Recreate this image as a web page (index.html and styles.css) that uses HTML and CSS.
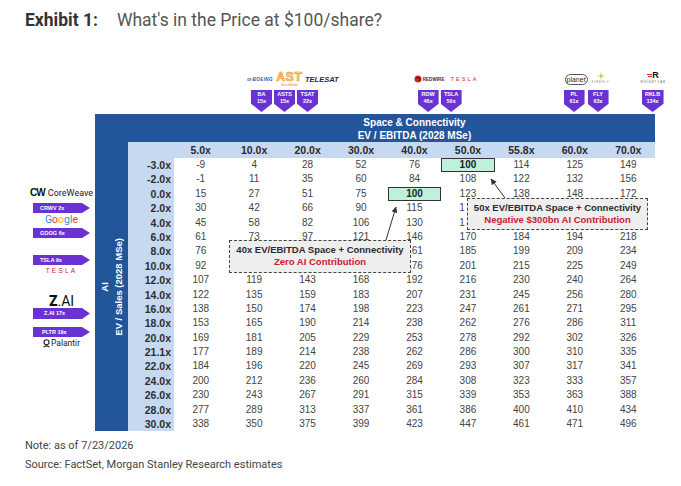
FILE: index.html
```html
<!DOCTYPE html>
<html>
<head>
<meta charset="utf-8">
<link rel="stylesheet" href="styles.css">
</head>
<body>
<div class="title"><b>Exhibit 1:</b><span class="sub">What's in the Price at $100/share?</span></div>

<div class="topstrip">
  <div class="grp g1">
    <div class="logos">
      <span class="boeing"><svg width="6" height="5" viewBox="0 0 6 5"><ellipse cx="3" cy="2.5" rx="2.6" ry="1.5" fill="none" stroke="#1d4fa0" stroke-width=".7"/><path d="M0.4 3.6 L5.6 1.4" stroke="#1d4fa0" stroke-width=".6"/></svg><span>BOEING</span></span>
      <span class="ast"><span class="ast-big">AST</span><span class="ast-small">SpaceMobile</span></span>
      <span class="telesat">TELESAT</span>
    </div>
    <div class="tags">
      <div class="ttag">BA<br>15x</div>
      <div class="ttag">ASTS<br>15x</div>
      <div class="ttag">TSAT<br>22x</div>
    </div>
  </div>
  <div class="grp g2">
    <div class="logos">
      <span class="redwire"><svg width="8" height="8" viewBox="0 0 9 9"><circle cx="4.5" cy="4.5" r="4" fill="#d42a2a"/><path d="M2.6 4.6a1.9 1.9 0 1 1 1.9 1.9" fill="none" stroke="#3a0d0d" stroke-width="1"/></svg><span>REDWIRE</span></span>
      <span class="tesla-top">TESLA</span>
    </div>
    <div class="tags">
      <div class="ttag">RDW<br>46x</div>
      <div class="ttag">TSLA<br>50x</div>
    </div>
  </div>
  <div class="grp g3">
    <div class="logos">
      <span class="planet">planet</span>
      <span class="firefly"><svg width="8" height="8" viewBox="0 0 8 8"><path d="M4 0 L4.7 3.3 L8 4 L4.7 4.7 L4 8 L3.3 4.7 L0 4 L3.3 3.3 Z" fill="#a9cc2e"/></svg><span>FIREFLY</span></span>
      <span class="rocket"><span class="rmark"><svg width="5" height="6" viewBox="0 0 5 6"><rect y="1" width="5" height="1" fill="#d8262c"/><rect x="1" y="3" width="4" height="1" fill="#d8262c"/></svg><b>R</b></span><span class="rtext">ROCKET LAB</span></span>
    </div>
    <div class="tags">
      <div class="ttag">PL<br>61x</div>
      <div class="ttag fly">FLY<br>63x</div>
      <div class="ttag rklb">RKLB<br>134x</div>
    </div>
  </div>
</div>

<div class="main">
  <div class="side">
    <div class="cw"><b>CW</b> CoreWeave</div>
    <div class="ltag t1">CRWV 2x</div>
    <div class="google"><span class="gb">G</span><span class="gr">o</span><span class="gy">o</span><span class="gb">g</span><span class="gg">l</span><span class="gr">e</span></div>
    <div class="ltag t2">GOOG 6x</div>
    <div class="ltag t3">TSLA 9x</div>
    <div class="tesla-side">TESLA</div>
    <div class="zai"><b>Z</b>.AI</div>
    <div class="ltag t4">Z.AI 17x</div>
    <div class="ltag t5">PLTR 19x</div>
    <div class="palantir"><svg width="7" height="9" viewBox="0 0 7 9"><circle cx="3.5" cy="3.3" r="2.5" fill="none" stroke="#222" stroke-width="1.1"/><path d="M0.6 8 L3.5 6.7 L6.4 8" fill="none" stroke="#222" stroke-width="1.1"/></svg><span>Palantir</span></div>
  </div>

  <div class="tbl">
    <div class="band">Space &amp; Connectivity<br>EV / EBITDA (2028 MSe)</div>
    <div class="axis"><span>AI<br>EV / Sales (2028 MSe)</span></div>

    <div class="hc"></div><div class="hc">5.0x</div><div class="hc">10.0x</div><div class="hc">20.0x</div><div class="hc">30.0x</div><div class="hc">40.0x</div><div class="hc">50.0x</div><div class="hc">55.8x</div><div class="hc">60.0x</div><div class="hc">70.0x</div>

    <div class="rl">-3.0x</div><div class="c">-9</div><div class="c">4</div><div class="c">28</div><div class="c">52</div><div class="c">76</div><div class="c hl">100</div><div class="c">114</div><div class="c">125</div><div class="c">149</div>
    <div class="rl">-2.0x</div><div class="c">-1</div><div class="c">11</div><div class="c">35</div><div class="c">60</div><div class="c">84</div><div class="c">108</div><div class="c">122</div><div class="c">132</div><div class="c">156</div>
    <div class="rl">0.0x</div><div class="c">15</div><div class="c">27</div><div class="c">51</div><div class="c">75</div><div class="c hl">100</div><div class="c">123</div><div class="c">138</div><div class="c">148</div><div class="c">172</div>
    <div class="rl">2.0x</div><div class="c">30</div><div class="c">42</div><div class="c">66</div><div class="c">90</div><div class="c">115</div><div class="c part">1</div><div class="c"></div><div class="c"></div><div class="c"></div>
    <div class="rl">4.0x</div><div class="c">45</div><div class="c">58</div><div class="c">82</div><div class="c">106</div><div class="c">130</div><div class="c part">1</div><div class="c"></div><div class="c"></div><div class="c"></div>
    <div class="rl">6.0x</div><div class="c">61</div><div class="c">73</div><div class="c">97</div><div class="c">121</div><div class="c">146</div><div class="c">170</div><div class="c">184</div><div class="c">194</div><div class="c">218</div>
    <div class="rl">8.0x</div><div class="c">76</div><div class="c"></div><div class="c"></div><div class="c"></div><div class="c">161</div><div class="c">185</div><div class="c">199</div><div class="c">209</div><div class="c">234</div>
    <div class="rl">10.0x</div><div class="c">92</div><div class="c"></div><div class="c"></div><div class="c"></div><div class="c">176</div><div class="c">201</div><div class="c">215</div><div class="c">225</div><div class="c">249</div>
    <div class="rl">12.0x</div><div class="c">107</div><div class="c">119</div><div class="c">143</div><div class="c">168</div><div class="c">192</div><div class="c">216</div><div class="c">230</div><div class="c">240</div><div class="c">264</div>
    <div class="rl">14.0x</div><div class="c">122</div><div class="c">135</div><div class="c">159</div><div class="c">183</div><div class="c">207</div><div class="c">231</div><div class="c">245</div><div class="c">256</div><div class="c">280</div>
    <div class="rl">16.0x</div><div class="c">138</div><div class="c">150</div><div class="c">174</div><div class="c">198</div><div class="c">223</div><div class="c">247</div><div class="c">261</div><div class="c">271</div><div class="c">295</div>
    <div class="rl">18.0x</div><div class="c">153</div><div class="c">165</div><div class="c">190</div><div class="c">214</div><div class="c">238</div><div class="c">262</div><div class="c">276</div><div class="c">286</div><div class="c">311</div>
    <div class="rl">20.0x</div><div class="c">169</div><div class="c">181</div><div class="c">205</div><div class="c">229</div><div class="c">253</div><div class="c">278</div><div class="c">292</div><div class="c">302</div><div class="c">326</div>
    <div class="rl">21.1x</div><div class="c">177</div><div class="c">189</div><div class="c">214</div><div class="c">238</div><div class="c">262</div><div class="c">286</div><div class="c">300</div><div class="c">310</div><div class="c">335</div>
    <div class="rl">22.0x</div><div class="c">184</div><div class="c">196</div><div class="c">220</div><div class="c">245</div><div class="c">269</div><div class="c">293</div><div class="c">307</div><div class="c">317</div><div class="c">341</div>
    <div class="rl">24.0x</div><div class="c">200</div><div class="c">212</div><div class="c">236</div><div class="c">260</div><div class="c">284</div><div class="c">308</div><div class="c">323</div><div class="c">333</div><div class="c">357</div>
    <div class="rl">26.0x</div><div class="c">230</div><div class="c">243</div><div class="c">267</div><div class="c">291</div><div class="c">315</div><div class="c">339</div><div class="c">353</div><div class="c">363</div><div class="c">388</div>
    <div class="rl">28.0x</div><div class="c">277</div><div class="c">289</div><div class="c">313</div><div class="c">337</div><div class="c">361</div><div class="c">386</div><div class="c">400</div><div class="c">410</div><div class="c">434</div>
    <div class="rl">30.0x</div><div class="c">338</div><div class="c">350</div><div class="c">375</div><div class="c">399</div><div class="c">423</div><div class="c">447</div><div class="c">461</div><div class="c">471</div><div class="c">496</div>

    <svg class="arrows" width="560" height="318" viewBox="0 0 560 318">
      <defs>
        <marker id="ah" viewBox="0 0 6 6" refX="5.5" refY="3" markerWidth="6" markerHeight="6" markerUnits="userSpaceOnUse" orient="auto">
          <path d="M0 0 L6 3 L0 6 Z" fill="#333"/>
        </marker>
      </defs>
      <line x1="291" y1="126" x2="301" y2="93" stroke="#333" stroke-width="1" marker-end="url(#ah)"/>
      <line x1="410" y1="84" x2="396" y2="65" stroke="#333" stroke-width="1" marker-end="url(#ah)"/>
    </svg>

    <div class="callout c1">40x EV/EBITDA Space + Connectivity<br><span class="red">Zero AI Contribution</span></div>
    <div class="callout c2">50x EV/EBITDA Space + Connectivity<br><span class="red">Negative $300bn AI Contribution</span></div>
  </div>
</div>

<div class="notes">
  <div class="note n1">Note: as of 7/23/2026</div>
  <div class="note n2">Source: FactSet, Morgan Stanley Research estimates</div>
</div>
</body>
</html>
```

FILE: styles.css
```css
* { box-sizing: border-box; }
html, body { margin: 0; padding: 0; background: #ffffff; }
body {
  width: 681px;
  height: 486px;
  overflow: hidden;
  font-family: Roboto, "Liberation Sans", sans-serif;
  color: #333;
}

/* Title */
.title {
  height: 31px;
  padding: 10px 0 0 25px;
  font-size: 17.5px;
  line-height: 21px;
  white-space: nowrap;
}
.title b { font-weight: 700; color: #333; }
.title .sub { margin-left: 19px; color: #555; font-weight: 400; }

/* Top logos + tags */
.topstrip {
  height: 83px;
  display: flex;
  align-items: flex-end;
  padding: 0 0 2px 247px;
}
.grp { display: flex; flex-direction: column; }
.g2 { margin-left: 75px; }
.g3 { margin-left: 85px; }
.logos { height: 18px; display: flex; align-items: center; white-space: nowrap; }
.tags { height: 22px; margin-top: 2px; display: flex; gap: 2px; }
.g1 .tags, .g2 .tags { padding-left: 4px; }
.ttag {
  width: 21px;
  height: 22px;
  background: #6a32d2;
  clip-path: polygon(0 0, 100% 0, 100% 62%, 50% 100%, 0 62%);
  color: #fff;
  font: bold 5.5px/6.5px "Liberation Sans", sans-serif;
  text-align: center;
  padding-top: 1px;
}
.ttag.fly { margin-left: 1px; }
.ttag.rklb { margin-left: 31px; width: 22px; }

.boeing { width: 26px; display: flex; align-items: center; gap: 1px; }
.boeing span { font: italic bold 4.5px "Liberation Sans", sans-serif; letter-spacing: .45px; color: #1d4fa0; }
.ast { width: 25px; margin-left: 4px; display: flex; flex-direction: column; align-items: center; }
.ast-big {
  font: bold 12px/12px "Liberation Sans", sans-serif;
  letter-spacing: .6px;
  color: #ffd9a3;
  -webkit-text-stroke: .7px #f0941c;
}
.ast-small { font: 3px/4px "Liberation Sans", sans-serif; color: #e08a1a; }
.telesat { margin-left: 3px; font: italic bold 7.5px "Liberation Sans", sans-serif; color: #1b2a4e; }

.redwire { width: 37px; display: flex; align-items: center; gap: 1px; }
.redwire span { font: bold 4.5px "Liberation Sans", sans-serif; color: #5a1616; letter-spacing: .1px; }
.tesla-top { font: 5.5px "Liberation Sans", sans-serif; letter-spacing: 2.1px; color: #d0222a; }

.planet {
  margin-left: 1px;
  height: 11px;
  width: 23px;
  border: .8px solid #555;
  border-radius: 6px;
  font: 7px/9.5px "Liberation Sans", sans-serif;
  color: #2a2a40;
  text-align: center;
}
.firefly { margin-left: 2px; width: 22px; display: flex; flex-direction: column; align-items: center; margin-top: -3px; }
.firefly span { font: 3px/4px "Liberation Sans", sans-serif; letter-spacing: .8px; color: #888; }
.rocket { margin-left: 26px; width: 31px; display: flex; flex-direction: column; align-items: center; margin-top: -3px; }
.rmark { display: flex; align-items: center; height: 9px; }
.rmark b { font: 900 9px/9px "Liberation Sans", sans-serif; color: #111; }
.rtext { font: 3px/4px "Liberation Sans", sans-serif; letter-spacing: .6px; color: #666; }

/* Main area */
.main { display: flex; }
.side {
  width: 95px;
  padding-left: 28px;
  display: flex;
  flex-direction: column;
  align-items: center;
}
.cw { margin-top: 74px; height: 10px; font-size: 9px; line-height: 10px; color: #222; white-space: nowrap; }
.cw b { font: 900 10px/10px "Liberation Sans", sans-serif; letter-spacing: -1px; color: #111; margin-right: 1px; }
.ltag {
  width: 57px;
  height: 10px;
  align-self: flex-start;
  margin-left: 5px;
  background: #6a32d2;
  clip-path: polygon(0 0, calc(100% - 8px) 0, 100% 50%, calc(100% - 8px) 100%, 0 100%);
  color: #fff;
  font: bold 5.5px/10px "Liberation Sans", sans-serif;
  padding-left: 7px;
  white-space: nowrap;
}
.t1 { margin-top: 5px; }
.t2 { margin-top: 3px; }
.t3 { margin-top: 17px; }
.t4 { margin-top: 1px; height: 11px; line-height: 11px; padding-left: 11px; }
.t5 { margin-top: 8px; padding-left: 9px; }
.google { margin-top: 1px; height: 11px; font-size: 10.5px; line-height: 11px; }
.gb { color: #4285f4; }
.gr { color: #ea4335; }
.gy { color: #fbbc05; }
.gg { color: #34a853; }
.tesla-side { margin-top: 2px; height: 7px; font: 6.5px/7px "Liberation Sans", sans-serif; letter-spacing: 2.2px; color: #d0222a; }
.zai { margin-top: 22px; height: 11px; font-size: 14px; line-height: 11px; color: #111; }
.zai b { font-weight: 900; }
.palantir { margin-top: 2px; height: 9px; display: flex; align-items: center; gap: 1px; font-size: 8.5px; line-height: 9px; color: #222; }

/* Table */
.tbl {
  position: relative;
  width: 560px;
  display: grid;
  grid-template-columns: 33px 46px repeat(9, 1fr);
  grid-template-rows: 28px 16px repeat(19, 14.4px);
  font-family: "Liberation Sans", Arial, sans-serif;
}
.band {
  grid-column: 1 / -1;
  grid-row: 1;
  background: #22559a;
  color: #fff;
  font-weight: bold;
  font-size: 10px;
  line-height: 13px;
  padding: 2px 0 0 79px;
  text-align: center;
}
.axis {
  grid-column: 1;
  grid-row: 2 / -1;
  background: #22559a;
  display: flex;
  align-items: center;
  justify-content: center;
}
.axis span {
  writing-mode: vertical-rl;
  transform: rotate(180deg);
  color: #fff;
  font-weight: bold;
  font-size: 9.5px;
  line-height: 14px;
  text-align: center;
  white-space: nowrap;
}
.hc {
  background: #c6d9f0;
  font-weight: bold;
  font-size: 10.5px;
  line-height: 16px;
  text-align: center;
  color: #2a2a2a;
}
.rl {
  background: #c6d9f0;
  font-weight: bold;
  font-size: 10.5px;
  line-height: 14.4px;
  text-align: right;
  padding-right: 3px;
  color: #2e2e2e;
}
.c {
  background: #fff;
  font-size: 10px;
  line-height: 14.4px;
  text-align: center;
  color: #444;
}
.c.part { text-align: left; padding-left: 18px; }
.c.hl {
  background: #bff0da;
  border: 1.5px solid #333;
  font-weight: bold;
  line-height: 11.4px;
  color: #222;
}

.arrows { position: absolute; left: 0; top: 0; z-index: 2; pointer-events: none; }

.callout {
  position: absolute;
  z-index: 3;
  background: #eeeeee;
  border: 1.5px dashed #444;
  font: bold 9.5px/12px "Liberation Sans", Arial, sans-serif;
  color: #2b2b2b;
  text-align: center;
  padding-top: 3px;
  white-space: nowrap;
}
.callout .red { color: #c8202f; }
.c1 { left: 134px; top: 126px; width: 182px; height: 33px; }
.c2 { left: 372px; top: 84px; width: 181px; height: 32px; }

/* Notes */
.notes { padding-left: 25px; font-size: 11px; color: #444; }
.note { line-height: 14px; white-space: nowrap; }
.n1 { margin-top: 8px; }
.n2 { margin-top: 5px; }
```
